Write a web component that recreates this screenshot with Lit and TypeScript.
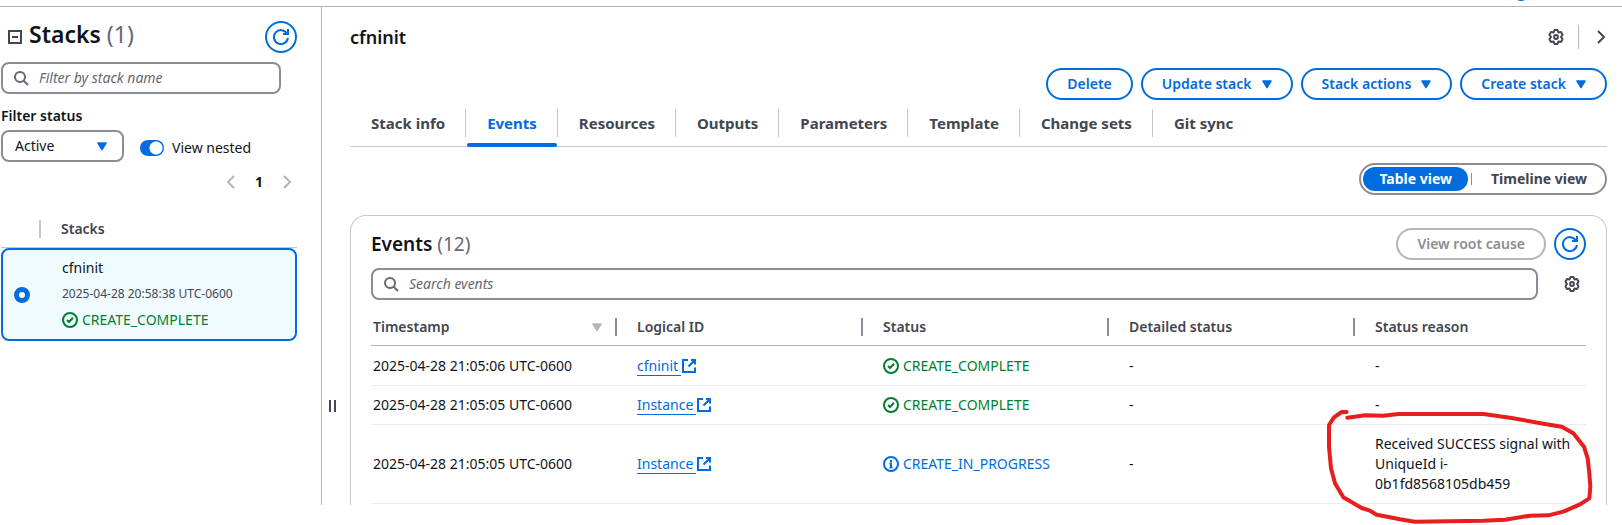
import { LitElement, html, css, svg } from "lit";
import { customElement, state } from "lit/decorators.js";

const caret = html`<svg class="caret" width="10" height="9" viewBox="0 0 10 9" aria-hidden="true"><path d="M1 1h8L5 7.500z" fill="currentColor" stroke="currentColor" stroke-width="1.500" stroke-linejoin="round"/></svg>`;

const line = (width: number, size: number, body: unknown) => html`<svg
  width=${size} height=${size} viewBox="0 0 16 16" fill="none" stroke="currentColor"
  stroke-width=${width} aria-hidden="true">${body}</svg>`;

const icons = {
  refresh: line(2, 16, svg`<path d="M10 5h5V0M14.900 8.800A7 7 0 1 1 14 4.600"/>`),
  search: line(2, 16, svg`<circle cx="7" cy="7" r="5"/><path d="m10.500 10.500 4.500 4.500"/>`),
  gear: line(2, 16, svg`<path stroke-linejoin="round" d="M6.500 1h3l.9 2.400 2.600-.4 1.600 2.700L13 8l1.600 2.300L13 13l-2.600-.4L9.500 15h-3l-.9-2.400L3 13l-1.600-2.700L3 8 1.400 5.700 3 3l2.600.4z"/><circle cx="8" cy="8" r="1.900"/>`),
  prev: line(2, 16, svg`<path d="m11 2-6 6 6 6"/>`),
  next: line(2, 16, svg`<path d="m5 2 6 6-6 6"/>`),
  check: line(2, 16, svg`<circle cx="8" cy="8" r="7"/><path d="m5 8 2 2 4-4.300"/>`),
  info: line(2, 16, svg`<circle cx="8" cy="8" r="7"/><path d="M8 4v2M6.500 7.500H8V11M6.500 11.500h3"/>`),
  external: line(2, 16, svg`<path d="M7 2H2v12h12V9.500M10 2h4v4.500M13.500 2.500 7.500 8.500"/>`),
  collapse: line(2, 16, svg`<path d="M2 2h12v12H2zM5 8h6"/>`),
};

const tabs = ["Stack info", "Events", "Resources", "Outputs", "Parameters", "Template", "Change sets", "Git sync"];

const events = [
  { time: "2025-04-28 21:05:06 UTC-0600", id: "cfninit", status: "CREATE_COMPLETE", detail: "-", reason: "-" },
  { time: "2025-04-28 21:05:05 UTC-0600", id: "Instance", status: "CREATE_COMPLETE", detail: "-", reason: "-" },
  { time: "2025-04-28 21:05:05 UTC-0600", id: "Instance", status: "CREATE_IN_PROGRESS", detail: "-", reason: "Received SUCCESS signal with UniqueId i-0b1fd8568105db459" },
];

const status = (name: string) => {
  const done = name === "CREATE_COMPLETE";
  return html`<span class="status ${done ? "done" : "progress"}">${done ? icons.check : icons.info}${name}</span>`;
};

@customElement("app-root")
export class AppRoot extends LitElement {
  @state() private tab = "Events";

  static styles = css`
    :host {
      display: block;
      position: relative;
      padding-bottom: 20px;
      overflow: hidden;
      background: #fff;
      color: #0f141a;
      font: 14px/20px "Noto Sans", "Open Sans", sans-serif;
    }
    * { box-sizing: border-box; }
    svg { display: block; flex: none; }
    h1, h2, h3 { margin: 0; font-weight: 600; }
    button, input, select { font: inherit; color: inherit; margin: 0; }
    button { background: none; border: 0; padding: 0; cursor: pointer; }
    a { color: inherit; text-decoration: none; }
    .topbar { height: 7px; border-bottom: 1px solid #b4b4bb; }
    .badge { position: absolute; top: -15px; right: 93px; width: 16px; height: 16px; border-radius: 8px; background: #006ce0; }
    .layout { display: flex; align-items: stretch; }
    .side { flex: none; width: 322px; padding: 14px 24px 0 1px; border-right: 1px solid #b4b4bb; }
    .row { display: flex; align-items: center; }
    .between { justify-content: space-between; }
    .side-head { align-items: flex-start; }
    .title { display: flex; align-items: center; gap: 6px; padding-left: 6px; }
    .title button { color: #424650; padding-top: 6px; }
    h1 { font-size: 23px; line-height: 26px; }
    h2 { font-size: 19px; line-height: 24px; }
    h3 { font-size: 18px; line-height: 22px; }
    .count { font-weight: 400; color: #656871; }
    .round { display: grid; place-items: center; width: 32px; height: 32px; border: 2px solid #006ce0; border-radius: 16px; color: #006ce0; }
    .search { display: flex; align-items: center; gap: 10px; height: 32px; padding: 0 10px; border: 2px solid #8c8c94; border-radius: 8px; color: #656871; }
    .search input { flex: 1; min-width: 0; border: 0; outline: 0; padding: 0; background: none; color: #0f141a; }
    .search input::placeholder { color: #656871; font-style: italic; opacity: 1; }
    .side .search { margin: 9px 16px 12px 0; }
    .label { display: block; font-weight: 600; margin-bottom: 4px; }
    .filters { gap: 16px; }
    .select { display: grid; align-items: center; width: 123px; color: #006ce0; }
    .select > * { grid-area: 1 / 1; }
    .select .caret { justify-self: end; margin-right: 17px; pointer-events: none; }
    select { appearance: none; width: 100%; height: 32px; padding: 0 12px; border: 2px solid #8c8c94; border-radius: 8px; background: #fff; color: #0f141a; }
    .toggle { display: flex; align-items: center; gap: 8px; padding-top: 4px; }
    .toggle input { appearance: none; width: 24px; height: 16px; border-radius: 8px; background: radial-gradient(circle at 16px 8px, #fff 6px, #006ce0 7px); }
    .pager { display: flex; justify-content: flex-end; align-items: center; gap: 16px; margin-top: 10px; padding-right: 2px; font-weight: 700; }
    .pager button { color: #b4b4bb; }
    .list-head { display: flex; align-items: center; gap: 20px; height: 38px; margin-top: 18px; padding-left: 38px; border-bottom: 1px solid #c6c6cd; color: #424650; font-weight: 600; }
    .list-head::before { content: ""; width: 2px; height: 18px; background: #c6c6cd; }
    .card { display: flex; align-items: center; gap: 32px; padding: 8px 11px; border: 2px solid #006ce0; border-radius: 8px; background: #f0fbff; }
    .card input { appearance: none; width: 16px; height: 16px; border: 5px solid #006ce0; border-radius: 8px; background: #fff; }
    .card label { display: grid; gap: 6px; padding-bottom: 1px; }
    .small { font-size: 12px; color: #424650; }
    .status { display: flex; align-items: center; gap: 4px; }
    .done { color: #00802f; }
    .progress { color: #006ce0; }
    .grip { flex: none; display: flex; gap: 3px; width: 28px; padding-left: 7px; margin-top: 393px; height: 12px; cursor: col-resize; }
    .grip::before, .grip::after { content: ""; width: 2px; background: #424650; }
    main { flex: 1; min-width: 0; padding: 16px 15px 0 0; }
    .name { height: 28px; }
    .tools { display: flex; align-items: center; gap: 14px; color: #424650; }
    .tools span { width: 1px; height: 24px; background: #b4b4bb; }
    .tools button:last-child { width: 16px; margin-right: -2px; }
    .actions { display: flex; justify-content: flex-end; gap: 8px; margin-top: 17px; }
    .btn { display: flex; align-items: center; gap: 10px; height: 32px; padding: 0 19px; border: 2px solid #006ce0; border-radius: 16px; color: #006ce0; font-weight: 600; white-space: nowrap; }
    .btn:disabled { border-color: #b4b4bb; color: #8c8c94; }
    .tabs { display: flex; height: 47px; border-bottom: 1px solid #c6c6cd; }
    .tab { position: relative; height: 47px; padding: 0 21px 2px; font-size: 15px; font-weight: 700; color: #424650; white-space: nowrap; }
    .tab:not(:last-child)::before { content: ""; position: absolute; right: 0; top: 9px; width: 1px; height: 28px; background: #c6c6cd; }
    .tab.on { color: #006ce0; }
    .tab.on::after { content: ""; position: absolute; left: 1px; right: 1px; bottom: 0; height: 4px; border-radius: 4px; background: #006ce0; }
    .views { display: flex; align-items: center; width: max-content; height: 32px; margin: 16px 0 20px auto; padding: 2px; border: 2px solid #8c8c94; border-radius: 16px; font-weight: 700; color: #424650; }
    .views button { height: 24px; padding: 0 16px; border-radius: 12px; }
    .views button.on { background: #006ce0; color: #fff; }
    .views span { width: 1px; height: 12px; margin: 0 3px; background: #8c8c94; }
    .panel { padding: 12px 20px 1px; border: 1px solid #c6c6cd; border-bottom: 0; border-radius: 16px 16px 0 0; }
    .panel .right { display: flex; gap: 8px; }
    .find { display: flex; align-items: center; gap: 26px; margin-top: 8px; padding-right: 6px; color: #424650; }
    .find .search { flex: 1; }
    table { width: 100%; margin-top: 8px; border-collapse: separate; border-spacing: 0; table-layout: fixed; }
    col { width: 246px; }
    col:last-child { width: auto; }
    th { height: 38px; padding: 1px 0 0 20px; border-bottom: 1px solid #b4b4bb; text-align: left; color: #424650; font-weight: 600; }
    td { padding: 9px 12px 9px 20px; border-bottom: 1px solid #ebebf0; }
    tr:first-child td { padding-top: 10px; }
    th:first-child, td:first-child { padding-left: 2px; white-space: nowrap; }
    .th { display: flex; align-items: center; height: 18px; line-height: 18px; }
    .th .caret { margin-left: auto; margin-right: 13px; color: #b4b4bb; }
    th:not(:last-child) .th { border-right: 2px solid #8c8c94; }
    .link { display: flex; width: max-content; height: 20px; align-items: center; color: #006ce0; }
    .link span { padding-right: 3px; border-bottom: 1px solid #006ce0; line-height: 18px; }
    .mark { position: absolute; right: 0; top: 390px; pointer-events: none; }
  `;

  render() {
    return html`
      <div class="topbar"><div class="badge"></div></div>
      <div class="layout">
        <aside class="side">
          <div class="row between side-head">
            <div class="title">
              <button aria-label="Collapse stacks">${icons.collapse}</button>
              <h1>Stacks <span class="count">(1)</span></h1>
            </div>
            <button class="round" aria-label="Refresh stacks">${icons.refresh}</button>
          </div>
          <div class="search">${icons.search}<input type="text" aria-label="Filter by stack name" placeholder="Filter by stack name"></div>
          <label class="label" for="status">Filter status</label>
          <div class="row filters">
            <div class="select"><select id="status"><option>Active</option></select>${caret}</div>
            <label class="toggle"><input type="checkbox" role="switch" checked>View nested</label>
          </div>
          <nav class="pager" aria-label="Pages">
            <button aria-label="Previous page">${icons.prev}</button>
            <span>1</span>
            <button aria-label="Next page">${icons.next}</button>
          </nav>
          <div class="list-head">Stacks</div>
          <div class="card">
            <input type="radio" id="stack" name="stack" checked>
            <label for="stack">
              <span>cfninit</span>
              <span class="small">2025-04-28 20:58:38 UTC-0600</span>
              ${status("CREATE_COMPLETE")}
            </label>
          </div>
        </aside>
        <div class="grip" role="separator" aria-orientation="vertical" aria-label="Resize panels"></div>
        <main>
          <div class="row between name">
            <h3>cfninit</h3>
            <div class="tools">
              <button aria-label="Preferences">${icons.gear}</button><span></span>
              <button aria-label="Close panel">${icons.next}</button>
            </div>
          </div>
          <div class="actions">
            <button class="btn">Delete</button>
            <button class="btn">Update stack ${caret}</button>
            <button class="btn">Stack actions ${caret}</button>
            <button class="btn">Create stack ${caret}</button>
          </div>
          <div class="tabs" role="tablist">
            ${tabs.map((t) => html`<button role="tab" class="tab ${t === this.tab ? "on" : ""}"
              aria-selected=${t === this.tab} @click=${() => (this.tab = t)}>${t}</button>`)}
          </div>
          <div class="views">
            <button class="on" aria-pressed="true">Table view</button><span></span>
            <button aria-pressed="false">Timeline view</button>
          </div>
          <section class="panel">
            <div class="row between">
              <h2>Events <span class="count">(12)</span></h2>
              <div class="right">
                <button class="btn" disabled>View root cause</button>
                <button class="round" aria-label="Refresh events">${icons.refresh}</button>
              </div>
            </div>
            <div class="find">
              <div class="search">${icons.search}<input type="text" aria-label="Search events" placeholder="Search events"></div>
              <button aria-label="Table preferences">${icons.gear}</button>
            </div>
            <table>
              <colgroup><col><col><col><col><col></colgroup>
              <thead>
                <tr>
                  <th><div class="th">Timestamp${caret}</div></th>
                  <th><div class="th">Logical ID</div></th>
                  <th><div class="th">Status</div></th>
                  <th><div class="th">Detailed status</div></th>
                  <th><div class="th">Status reason</div></th>
                </tr>
              </thead>
              <tbody>
                ${events.map((e) => html`<tr>
                  <td>${e.time}</td>
                  <td><a class="link" href="#"><span>${e.id}</span>${icons.external}</a></td>
                  <td>${status(e.status)}</td>
                  <td>${e.detail}</td>
                  <td>${e.reason}</td>
                </tr>`)}
              </tbody>
            </table>
          </section>
        </main>
      </div>
      <svg class="mark" width="312" height="135" viewBox="0 0 936 405" fill="none" stroke="#e81e1e" stroke-width="12" stroke-linecap="round" stroke-linejoin="round" aria-hidden="true">
        <path d="M112 83 165 76 220 77 265 72H520L600 83 700 101 755 110 790 130 822 170 833 205 838 250 841 290 838 325 810 343 760 365 715 376 660 377 585 389 520 392 315 395 270 388 200 374 180 362 155 354 100 322 75 280 63 235 57 170V105L72 82 95 66H110"/>
      </svg>
    `;
  }
}
